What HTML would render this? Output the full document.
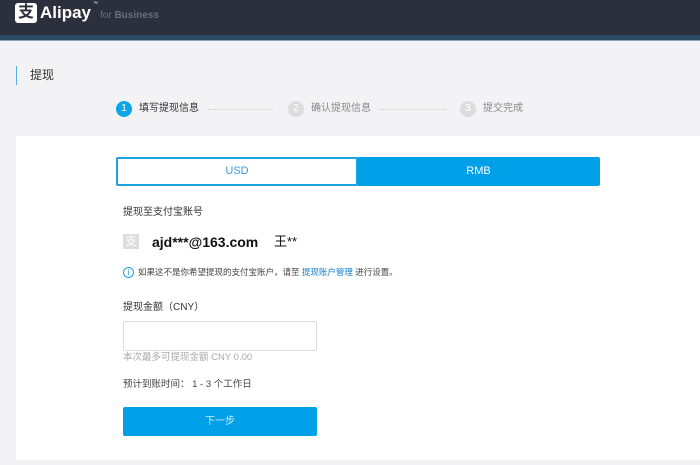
<!DOCTYPE html>
<html><head><meta charset="utf-8"><style>
*{margin:0;padding:0;box-sizing:border-box}
body{width:700px;height:465px;background:#f3f2f4;font-family:"Liberation Sans","Noto Sans CJK SC",sans-serif;position:relative;overflow:hidden;color:#333}
.hdr{position:absolute;left:0;top:0;width:700px;height:35px;background:#2c2f3c}
.band{position:absolute;left:0;top:35px;width:700px;height:5px;background:#2f4a64}
.band2{position:absolute;left:0;top:40px;width:700px;height:1px;background:#8ea4b8}
.abs{position:absolute;white-space:nowrap}
.card{position:absolute;left:16px;top:136px;width:684px;height:324px;background:#fff}
.circ{position:absolute;width:16px;height:16px;border-radius:8px;color:#fff;font-size:10px;text-align:center;line-height:16px}
.dots{position:absolute;border-top:1px dotted #ccc;height:0}
</style></head><body>
<div class="hdr"></div><div class="band"></div><div class="band2"></div>
<div class="abs" style="left:15px;top:3px;width:22px;height:20px;background:#fff;border-radius:3px;color:#2c2f3c;font-size:16px;line-height:20px;text-align:center;font-weight:bold">支</div>
<div class="abs" style="left:40px;top:2px;color:#fff;font-size:17px;font-weight:bold;line-height:22px">Alipay</div>
<div class="abs" style="left:93px;top:1px;color:#fff;font-size:5px">™</div>
<div class="abs" style="left:100px;top:10px;color:#6b6e78;font-size:10px;line-height:12px">for <b>Business</b></div>
<div class="abs" style="left:16px;top:66px;width:1px;height:19px;background:#5ab1e0"></div>
<div class="abs" style="left:30px;top:67px;font-size:12px;line-height:16px">提现</div>
<div class="circ" style="left:116px;top:101px;background:#0ea4e8">1</div>
<div class="abs" style="left:139px;top:101px;font-size:10px;line-height:16px;color:#333">填写提现信息</div>
<div class="dots" style="left:208px;top:109px;width:66px"></div>
<div class="circ" style="left:288px;top:101px;background:#ddd">2</div>
<div class="abs" style="left:311px;top:101px;font-size:10px;line-height:16px;color:#888">确认提现信息</div>
<div class="dots" style="left:380px;top:109px;width:66px"></div>
<div class="circ" style="left:460px;top:101px;background:#ddd">3</div>
<div class="abs" style="left:483px;top:101px;font-size:10px;line-height:16px;color:#888">提交完成</div>
<div class="card"></div>
<div class="abs" style="left:116px;top:157px;width:242px;height:29px;border:2px solid #1fa3e0;border-radius:2px;color:#3a9ad6;font-size:11px;text-align:center;line-height:25px">USD</div>
<div class="abs" style="left:357px;top:157px;width:243px;height:29px;background:#00a0e9;border-radius:2px;color:#fff;font-size:11px;text-align:center;line-height:29px">RMB</div>
<div class="abs" style="left:123px;top:206px;font-size:10px;line-height:14px">提现至支付宝账号</div>
<div class="abs" style="left:123px;top:234px;width:16px;height:15px;background:#ddd;color:#fff;font-size:12px;line-height:15px;text-align:center">支</div>
<div class="abs" style="left:152px;top:233px;font-size:14px;font-weight:bold;line-height:18px;color:#111">ajd***@163.com</div>
<div class="abs" style="left:274px;top:233px;font-size:13px;line-height:18px;color:#111">王**</div>
<div class="abs" style="left:123px;top:267px;width:11px;height:11px;border:1px solid #1a9be0;border-radius:6px;color:#1a9be0;font-size:8px;line-height:9px;text-align:center">i</div>
<div class="abs" style="left:138px;top:266px;font-size:8.5px;line-height:13px;color:#444">如果这不是你希望提现的支付宝账户，请至 <span style="color:#1580c8">提现账户管理</span> 进行设置。</div>
<div class="abs" style="left:123px;top:301px;font-size:10px;line-height:14px">提现金额（CNY）</div>
<div class="abs" style="left:123px;top:321px;width:194px;height:30px;border:1px solid #ddd;border-radius:2px"></div>
<div class="abs" style="left:123px;top:352px;font-size:9.5px;line-height:12px;color:#aaa">本次最多可提现金额 CNY 0.00</div>
<div class="abs" style="left:123px;top:379px;font-size:9.5px;line-height:12px;color:#444">预计到账时间： 1 - 3 个工作日</div>
<div class="abs" style="left:123px;top:407px;width:194px;height:29px;background:#00a0e9;border-radius:2px;color:#cfeefc;font-size:10px;line-height:29px;text-align:center">下一步</div>
</body></html>
